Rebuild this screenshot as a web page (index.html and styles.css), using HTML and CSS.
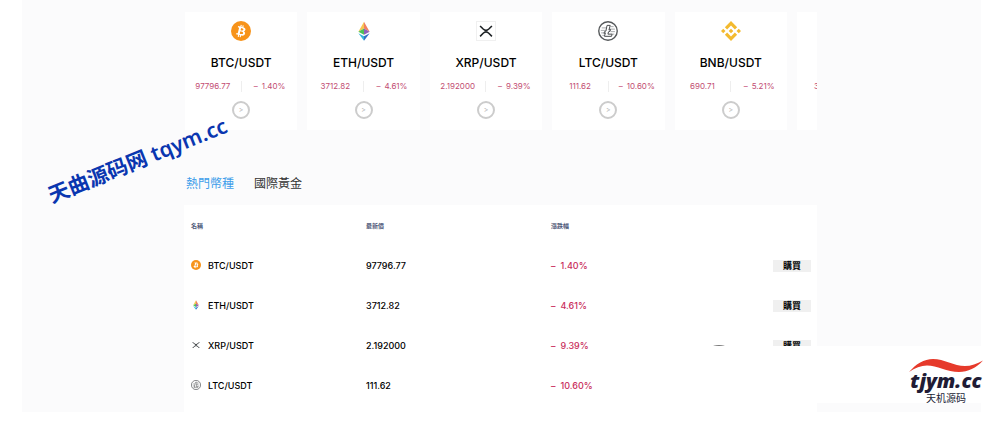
FILE: index.html
```html
<!DOCTYPE html>
<html lang="zh-Hant">
<head>
  <meta charset="UTF-8" />
  <meta name="viewport" content="width=device-width, initial-scale=1.0"/>
  <title>熱門幣種</title>
  <link rel="stylesheet" href="styles.css">
</head>
<body>
  <!-- coin icons -->
  <svg class="sprite" aria-hidden="true">
    <symbol id="btc" viewBox="0 0 32 32">
      <circle cx="16" cy="16" r="16" fill="#f7931a"/>
      <path fill="#fff" fill-rule="evenodd" d="M23.2 14c.3-2.100-1.300-3.200-3.500-4l.7-2.800-1.700-.4-.7 2.800-1.400-.3.700-2.800-1.700-.4-.7 2.800-3.500-.9-.5 1.900s1.300.3 1.200.3c.7.2.8.6.8 1l-2 7.900c-.1.200-.3.500-.8.400l-1.200-.3-.9 2 3.400.9-.7 2.900 1.700.4.700-2.900 1.400.4-.7 2.800 1.700.4.700-2.900c3 .6 5.200.3 6.100-2.400.8-2.100 0-3.400-1.500-4.200 1.100-.3 1.900-1 2.200-2.500zm-3.900 5.500c-.5 2.200-4.200 1-5.400.7l1-3.900c1.200.3 5 .9 4.400 3.200zm.5-5.500c-.5 2-3.500 1-4.500.7l.9-3.500c1 .2 4.200.7 3.600 2.800z"/>
    </symbol>
    <symbol id="eth" viewBox="0 0 32 32">
      <path fill="#f6c552" d="M16 1v11l-9 5z"/>
      <path fill="#f0805f" d="M16 1v11l9 5z"/>
      <path fill="#4fc257" d="M7 17 16 12v10z"/>
      <path fill="#9060b8" d="M25 17 16 12v10z"/>
      <path fill="#35b5dc" d="M7 19.500 16 24.500v7z"/>
      <path fill="#3470c4" d="M25 19.500 16 24.500v7z"/>
    </symbol>
    <symbol id="xrp" viewBox="0 0 32 32">
      <path fill="none" stroke="#1c2023" stroke-width="2.800" d="M5.500 7 11 12.500Q16 17.200 21 12.500L26.500 7M5.500 25.500 11 20Q16 15.300 21 20L26.500 25.500"/>
    </symbol>
    <symbol id="ltc" viewBox="0 0 32 32">
      <circle cx="16" cy="16" r="14.800" fill="#fff" stroke="#55585a" stroke-width="2.200"/>
      <path fill="none" stroke="#8c8f91" stroke-width="1.200" d="M6 11h7M4.500 15h7M5 19h5M7 23h3M20 9h5M19 13h8M20 17h7M22 21h4"/>
      <path fill="#fff" stroke="#4a4d4f" stroke-width="1.600" d="M14.500 7h5l-2 7.500 2.500-1-.7 2.800-2.500 1-.9 3.700h6.600l-.8 3.500H10.300l1.500-5.600-2.200.9.700-2.700 2.300-1z"/>
    </symbol>
    <symbol id="bnb" viewBox="0 0 32 32">
      <path fill="#f3ba2f" d="M9.800 13.500 16 7.300l6.200 6.200 3.600-3.600L16 0 6.200 9.900zM0 16l3.600-3.600L7.200 16l-3.600 3.600zM9.800 18.500 16 24.700l6.200-6.200 3.600 3.600L16 32l-9.800-9.900zM24.800 16l3.600-3.600L32 16l-3.600 3.600zM19.700 16 16 12.300 12.300 16l3.700 3.700z"/>
    </symbol>
  </svg>

  <main class="page">
    <div class="container">
      <div class="cards">
        <article class="card">
          <svg class="coin"><use href="#btc"/></svg>
          <h2>BTC/USDT</h2>
          <div class="quote"><span>97796.77</span><span><i>–</i>1.40%</span></div>
          <button class="go" aria-label="BTC/USDT">&gt;</button>
        </article>
        <article class="card">
          <svg class="coin"><use href="#eth"/></svg>
          <h2>ETH/USDT</h2>
          <div class="quote"><span>3712.82</span><span><i>–</i>4.61%</span></div>
          <button class="go" aria-label="ETH/USDT">&gt;</button>
        </article>
        <article class="card">
          <svg class="coin framed"><use href="#xrp"/></svg>
          <h2>XRP/USDT</h2>
          <div class="quote"><span>2.192000</span><span><i>–</i>9.39%</span></div>
          <button class="go" aria-label="XRP/USDT">&gt;</button>
        </article>
        <article class="card">
          <svg class="coin"><use href="#ltc"/></svg>
          <h2>LTC/USDT</h2>
          <div class="quote"><span>111.62</span><span><i>–</i>10.60%</span></div>
          <button class="go" aria-label="LTC/USDT">&gt;</button>
        </article>
        <article class="card">
          <svg class="coin"><use href="#bnb"/></svg>
          <h2>BNB/USDT</h2>
          <div class="quote"><span>690.71</span><span><i>–</i>5.21%</span></div>
          <button class="go" aria-label="BNB/USDT">&gt;</button>
        </article>
        <article class="card">
          <svg class="coin"></svg>
          <h2>&nbsp;</h2>
          <div class="quote"><span>33.06</span><span></span></div>
        </article>
      </div>

      <div class="tabs">
        <button class="tab active">熱門幣種</button>
        <button class="tab">國際黃金</button>
      </div>

      <div class="market">
        <table>
          <thead>
            <tr><th class="col-name">名稱</th><th class="col-price">最新價</th><th>漲跌幅</th><th></th></tr>
          </thead>
          <tbody>
            <tr>
              <td><div class="pair"><svg><use href="#btc"/></svg>BTC/USDT</div></td>
              <td>97796.77</td>
              <td class="down"><i>–</i>1.40%</td>
              <td class="action"><button class="buy">購買</button></td>
            </tr>
            <tr>
              <td><div class="pair"><svg><use href="#eth"/></svg>ETH/USDT</div></td>
              <td>3712.82</td>
              <td class="down"><i>–</i>4.61%</td>
              <td class="action"><button class="buy">購買</button></td>
            </tr>
            <tr>
              <td><div class="pair"><svg><use href="#xrp"/></svg>XRP/USDT</div></td>
              <td>2.192000</td>
              <td class="down"><i>–</i>9.39%</td>
              <td class="action"><button class="buy">購買</button></td>
            </tr>
            <tr>
              <td><div class="pair"><svg><use href="#ltc"/></svg>LTC/USDT</div></td>
              <td>111.62</td>
              <td class="down"><i>–</i>10.60%</td>
              <td class="action"></td>
            </tr>
          </tbody>
        </table>
      </div>
    </div>

    <div class="watermark">天曲源码网 tqym.cc</div>
    <div class="bubble"></div>
    <div class="brand-bar">
      <div class="brand">
        <svg class="swoosh" viewBox="0 0 74 14" aria-hidden="true">
          <path fill="#e63a2b" d="M0 13C7 5 15 0 24 0c11 0 21 7 32 7 6 0 12-2 18-5.500C67 9 59 13 50 13 38 13 28 6.500 18 6.500 12 6.500 6 9 0 13z"/>
        </svg>
        <strong>tjym.cc</strong>
        <span>天机源码</span>
      </div>
    </div>
  </main>
</body>
</html>
```
FILE: styles.css
```css
* {
  box-sizing: border-box;
}

body {
  margin: 0;
  background-color: #fff;
  font-family: Inter, "Noto Sans CJK TC", sans-serif;
  color: #000;
}

button {
  font-family: inherit;
  border: none;
  padding: 0;
  cursor: pointer;
}

i {
  font-style: normal;
  margin-right: 4px;
}

.sprite {
  position: absolute;
  width: 0;
  height: 0;
}

.page {
  position: relative;
  margin: 0 19px 20px 22px;
  padding: 12px 164px 0 162px;
  background-color: #fbfbfc;
}

/* coin cards */
.cards {
  display: flex;
  gap: 10px;
  padding-left: 1px;
  overflow: hidden;
}

.card {
  flex: 0 0 calc((100% - 70px) / 5);
  display: flex;
  flex-direction: column;
  align-items: center;
  height: 118px;
  padding-top: 9px;
  background-color: #fff;
}

.coin {
  width: 20px;
  height: 20px;
}

.framed {
  border: 1px solid #f0f0f0;
}

.card h2 {
  margin: 13px 0 0;
  font-size: 12px;
  line-height: 18px;
  font-weight: 500;
}

.quote {
  display: flex;
  align-self: stretch;
  margin-top: 9px;
  font-size: 8px;
  line-height: 11px;
  color: #c24c72;
}

.quote span {
  flex: 1;
  text-align: center;
  white-space: nowrap;
}

.quote span + span {
  border-left: 1px solid #eee;
}

.go {
  width: 18px;
  height: 18px;
  margin-top: 9px;
  border: 2px solid #ccc;
  border-radius: 50%;
  background-color: #fff;
  color: #aaa;
  font-size: 7px;
  line-height: 14px;
}

/* tabs */
.tabs {
  display: flex;
  gap: 20px;
  padding: 45px 2px 12px;
}

.tab {
  background: none;
  color: #333;
  font-size: 12px;
  line-height: 18px;
}

.tab.active {
  color: #409eea;
}

/* price table */
.market {
  padding: 0 6px 7px 7px;
  background-color: #fff;
}

table {
  width: 100%;
  border-collapse: collapse;
  table-layout: fixed;
  font-size: 9px;
  font-weight: 500;
}

th, td {
  height: 40px;
  padding: 0;
  text-align: left;
}

th {
  color: #4e5878;
  font-size: 6px;
}

.col-name {
  width: 175px;
}

.col-price {
  width: 185px;
}

.pair {
  display: flex;
  align-items: center;
  gap: 7px;
}

.pair svg {
  width: 10px;
  height: 10px;
}

.down {
  color: #c92e5c;
}

.down i {
  margin-right: 5px;
}

.action {
  padding-top: 2px;
  text-align: right;
}

.buy {
  width: 38px;
  height: 12px;
  background-color: #f0f0f0;
  color: #000;
  font-size: 9px;
  font-weight: 700;
  line-height: 12px;
  vertical-align: middle;
}

/* things floating over the page */
.watermark {
  position: absolute;
  left: 20px;
  top: 144px;
  transform: rotate(-22deg);
  color: #0a36b0;
  font-family: "Noto Sans", "Noto Sans CJK SC", sans-serif;
  font-size: 21px;
  font-weight: 600;
  line-height: 32px;
  white-space: nowrap;
}

.bubble {
  position: absolute;
  right: 242px;
  bottom: 27px;
  width: 40px;
  height: 40px;
  border: 1px solid #777;
  border-radius: 50%;
}

.brand-bar {
  position: absolute;
  right: -19px;
  bottom: 9px;
  display: flex;
  justify-content: flex-end;
  width: 310px;
  padding: 13px 17px 0 0;
  height: 57px;
  background-color: #fff;
}

.brand {
  display: flex;
  flex-direction: column;
  align-items: center;
  color: #211c35;
}

.swoosh {
  width: 74px;
  height: 14px;
}

.brand strong {
  margin-bottom: 4px;
  font-family: "Open Sans", sans-serif;
  font-size: 20px;
  font-style: italic;
  font-weight: 800;
  line-height: 16px;
}

.brand span {
  font-family: "Noto Sans CJK SC", sans-serif;
  font-size: 10px;
  line-height: 10px;
}
```
